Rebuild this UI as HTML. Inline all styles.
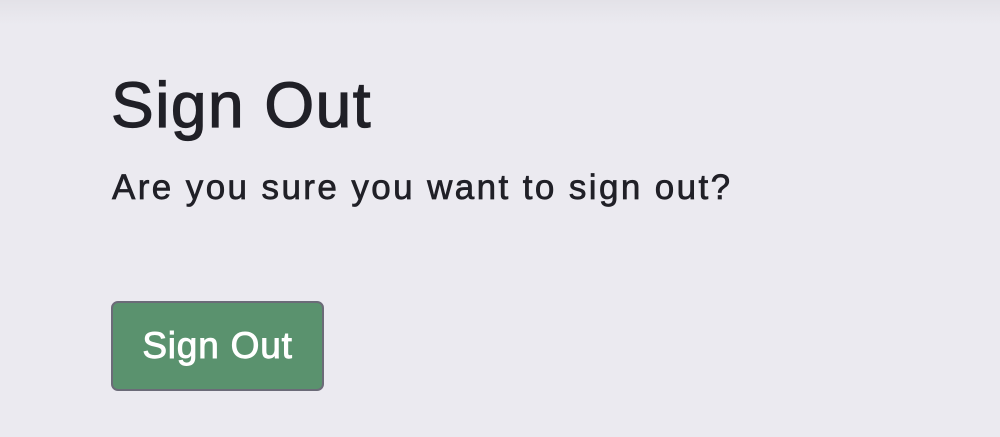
<!DOCTYPE html>
<html><head><style>
body{margin:0;width:1000px;height:437px;background:linear-gradient(#e3e2e8 0,#ebeaf0 25px,#ebeaf0 100%);font-family:"Liberation Sans",sans-serif;color:#202027;position:relative;overflow:hidden}
h1{position:absolute;left:111px;top:67px;margin:0;font-size:64px;font-weight:normal;line-height:76px;letter-spacing:1.5px;-webkit-text-stroke:1.2px #202027}
p{position:absolute;left:112px;top:166px;margin:0;font-size:35px;line-height:44px;letter-spacing:2.4px;-webkit-text-stroke:0.7px #202027}
.btn{position:absolute;left:111px;top:301px;width:209px;height:86px;background:#5a926e;border:2px solid #6b6b78;border-radius:7px;color:#fff;font-size:37px;line-height:86px;text-align:center;letter-spacing:0.8px;-webkit-text-stroke:0.9px #fff}
</style></head><body>
<h1>Sign Out</h1>
<p>Are you sure you want to sign out?</p>
<div class="btn">Sign Out</div>
</body></html>
